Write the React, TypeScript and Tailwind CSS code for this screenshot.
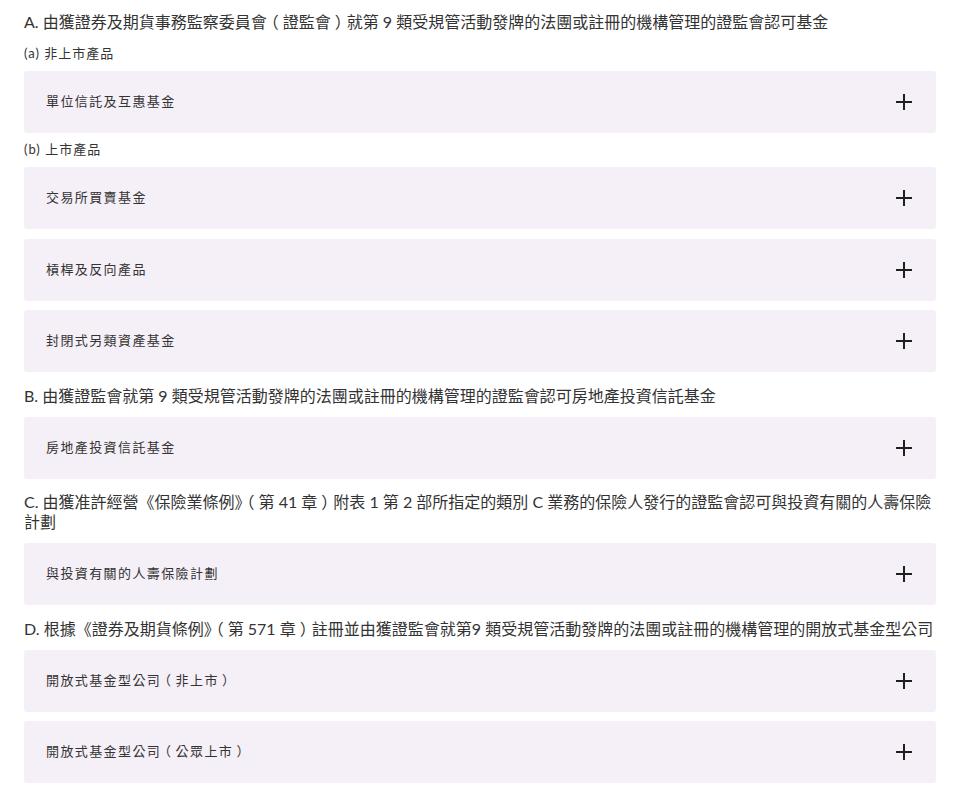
import React from "react";

const FONT = { fontFamily: 'Lato, "Noto Sans CJK TC", "Noto Sans CJK SC", sans-serif' };

function L() {
  return <span className="ml-[-0.25em] mr-[0.25em]">（</span>;
}
function R() {
  return <span className="ml-[0.25em] mr-[-0.25em]">）</span>;
}

function Heading({ children, first }: { children: React.ReactNode; first?: boolean }) {
  return (
    <div className={`${first ? "" : "mt-[13.5px]"} mb-[11px] text-[16px] leading-[20px] text-[#333333]`}>
      {children}
    </div>
  );
}

function Label({ children, first }: { children: React.ReactNode; first?: boolean }) {
  return (
    <div className={`${first ? "" : "mt-[6px]"} mb-[8px] text-[13px] leading-[20px] tracking-[1px] text-[#333333]`}>
      {children}
    </div>
  );
}

function Plus() {
  return (
    <svg width="16" height="16" viewBox="0 0 16 16" className="shrink-0">
      <line x1="8" y1="0" x2="8" y2="16" stroke="#1f1f1f" strokeWidth="2" />
      <line x1="0" y1="8" x2="16" y2="8" stroke="#1f1f1f" strokeWidth="2" />
    </svg>
  );
}

function Card({ children, follow }: { children: React.ReactNode; follow?: boolean }) {
  return (
    <div
      className={`${follow ? "mt-[9.5px]" : ""} flex h-[62px] items-center justify-between rounded-[3px] bg-[#f5eff7] pl-[22px] pr-[24px]`}
    >
      <span className="whitespace-nowrap text-[13px] tracking-[1.4px] text-[#333333]">{children}</span>
      <Plus />
    </div>
  );
}

export default function App() {
  return (
    <div className="min-h-screen bg-white" style={FONT}>
      <div className="mx-[24px] flex w-[912px] flex-col pt-[12px]">
        <Heading first>
          A. 由獲證券及期貨事務監察委員會<L />證監會<R />就第 9 類受規管活動發牌的法團或註冊的機構管理的證監會認可基金
        </Heading>
        <Label first>(a) 非上市產品</Label>
        <Card>單位信託及互惠基金</Card>
        <Label>(b) 上市產品</Label>
        <Card>交易所買賣基金</Card>
        <Card follow>槓桿及反向產品</Card>
        <Card follow>封閉式另類資產基金</Card>
        <Heading>
          B. 由獲證監會就第 9 類受規管活動發牌的法團或註冊的機構管理的證監會認可房地產投資信託基金
        </Heading>
        <Card>房地產投資信託基金</Card>
        <Heading>
          C. 由獲准許經營《保險業條例》<L />第 41 章<R />附表 1 第 2 部所指定的類別 C 業務的保險人發行的證監會認可與投資有關的人壽保險計劃
        </Heading>
        <Card>與投資有關的人壽保險計劃</Card>
        <Heading>
          D. 根據《證券及期貨條例》<L />第 571 章<R />註冊並由獲證監會就第9 類受規管活動發牌的法團或註冊的機構管理的開放式基金型公司
        </Heading>
        <Card>
          開放式基金型公司<L />非上市<R />
        </Card>
        <Card follow>
          開放式基金型公司<L />公眾上市<R />
        </Card>
      </div>
    </div>
  );
}
